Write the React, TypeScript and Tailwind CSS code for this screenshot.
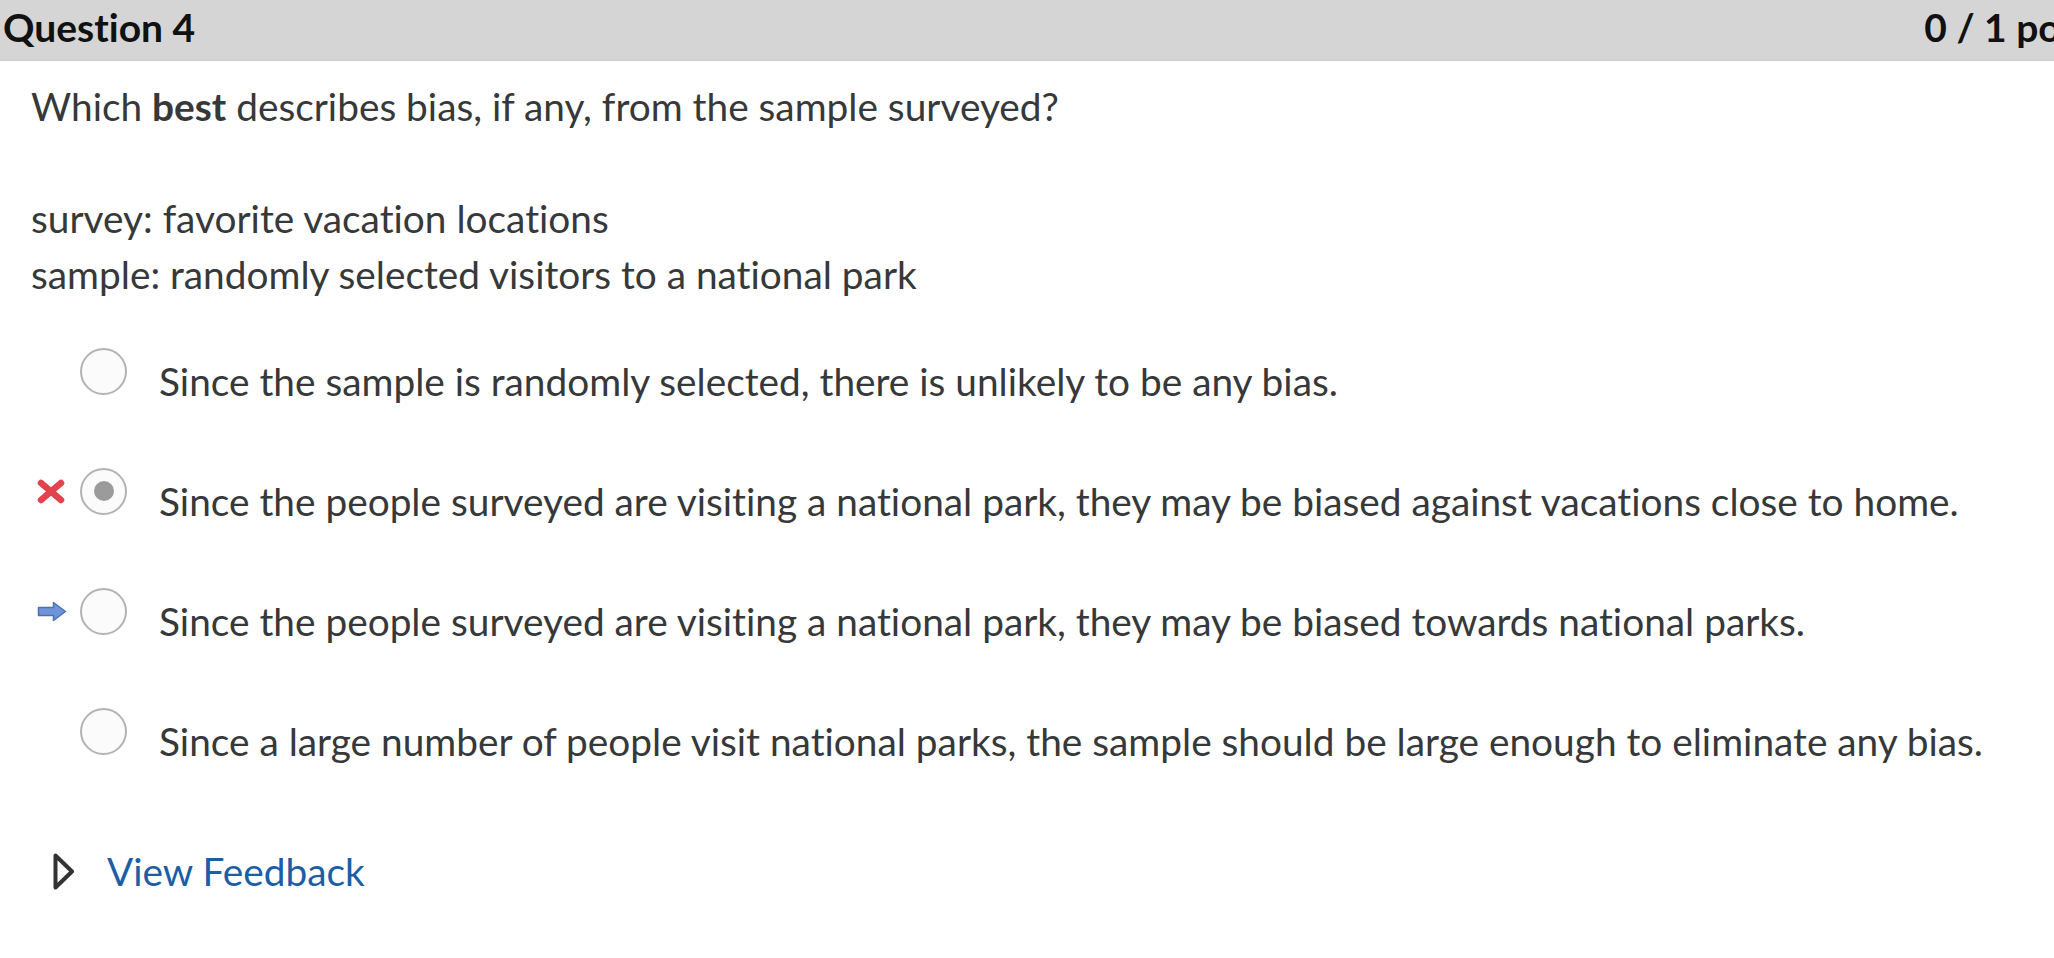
import React from 'react';

type Mark = 'none' | 'wrong' | 'answer';

interface Choice {
  text: string;
  selected: boolean;
  mark: Mark;
}

const choices: Choice[] = [
  { text: 'Since the sample is randomly selected, there is unlikely to be any bias.', selected: false, mark: 'none' },
  { text: 'Since the people surveyed are visiting a national park, they may be biased against vacations close to home.', selected: true, mark: 'wrong' },
  { text: 'Since the people surveyed are visiting a national park, they may be biased towards national parks.', selected: false, mark: 'answer' },
  { text: 'Since a large number of people visit national parks, the sample should be large enough to eliminate any bias.', selected: false, mark: 'none' },
];

const WrongIcon = () => (
  <svg width="28" height="25" viewBox="0 0 28 25">
    <g stroke="#e2434c" strokeWidth="6.5" strokeLinecap="round">
      <line x1="4" y1="4" x2="24" y2="21" />
      <line x1="24" y1="4" x2="4" y2="21" />
    </g>
  </svg>
);

const AnswerIcon = () => (
  <svg width="30" height="21" viewBox="0 0 30 21">
    <path d="M1.5 6.5 H16.5 V1.5 L28.5 10.5 L16.5 19.5 V14.5 H1.5 Z" fill="#6e95d8" stroke="#4b70b3" strokeWidth="1.5" strokeLinejoin="round" />
  </svg>
);

const Caret = () => (
  <svg width="22" height="37" viewBox="0 0 22 37">
    <path d="M2.5 2.5 L19 18.5 L2.5 34.5 Z" fill="none" stroke="#333333" strokeWidth="4" strokeLinejoin="round" />
  </svg>
);

const Radio = ({ selected }: { selected: boolean }) => (
  <div className="w-[47px] h-[47px] shrink-0 rounded-full border-2 border-[#b3b3b3] bg-[#fbfbfb] flex items-center justify-center -translate-y-[10px]">
    {selected && <div className="w-[20px] h-[20px] rounded-full bg-[#9b9b9b]" />}
  </div>
);

const App: React.FC = () => {
  return (
    <div
      className="w-[2054px] h-[958px] overflow-hidden bg-white text-[#363839] [font-variant-ligatures:none]"
      style={{ fontFamily: 'Lato, "Liberation Sans", sans-serif' }}
    >
      <div className="w-[2150px] h-[61px] bg-[#d5d5d5] border-b border-[#cdcdcd] flex items-center justify-between pl-[3px] pr-[26px] pb-[5px] text-[39px] font-bold text-[#111111]">
        <span>Question 4</span>
        <span className="whitespace-nowrap">0 / 1 points</span>
      </div>

      <div className="pl-[31px] pt-[17px] text-[38.8px] leading-[56px]">
        <p>Which <b className="font-bold">best</b> describes bias, if any, from the sample surveyed?</p>
        <p>&nbsp;</p>
        <p>survey: favorite vacation locations</p>
        <p>sample: randomly selected visitors to a national park</p>

        <div className="mt-[51px] flex flex-col gap-[64px]">
          {choices.map((c, i) => (
            <div key={i} className="flex items-center">
              <div className="w-[49px] shrink-0 flex items-center pl-[6px] -translate-y-[10px]">
                {c.mark === 'wrong' && <WrongIcon />}
                {c.mark === 'answer' && <AnswerIcon />}
              </div>
              <Radio selected={c.selected} />
              <span className="ml-[32px] whitespace-nowrap">{c.text}</span>
            </div>
          ))}
        </div>

        <div className="mt-[74px] flex items-center">
          <div className="w-[76px] shrink-0 flex items-center pl-[22px]">
            <Caret />
          </div>
          <span className="text-[#1c5ea6]">View Feedback</span>
        </div>
      </div>
    </div>
  );
};

export default App;
